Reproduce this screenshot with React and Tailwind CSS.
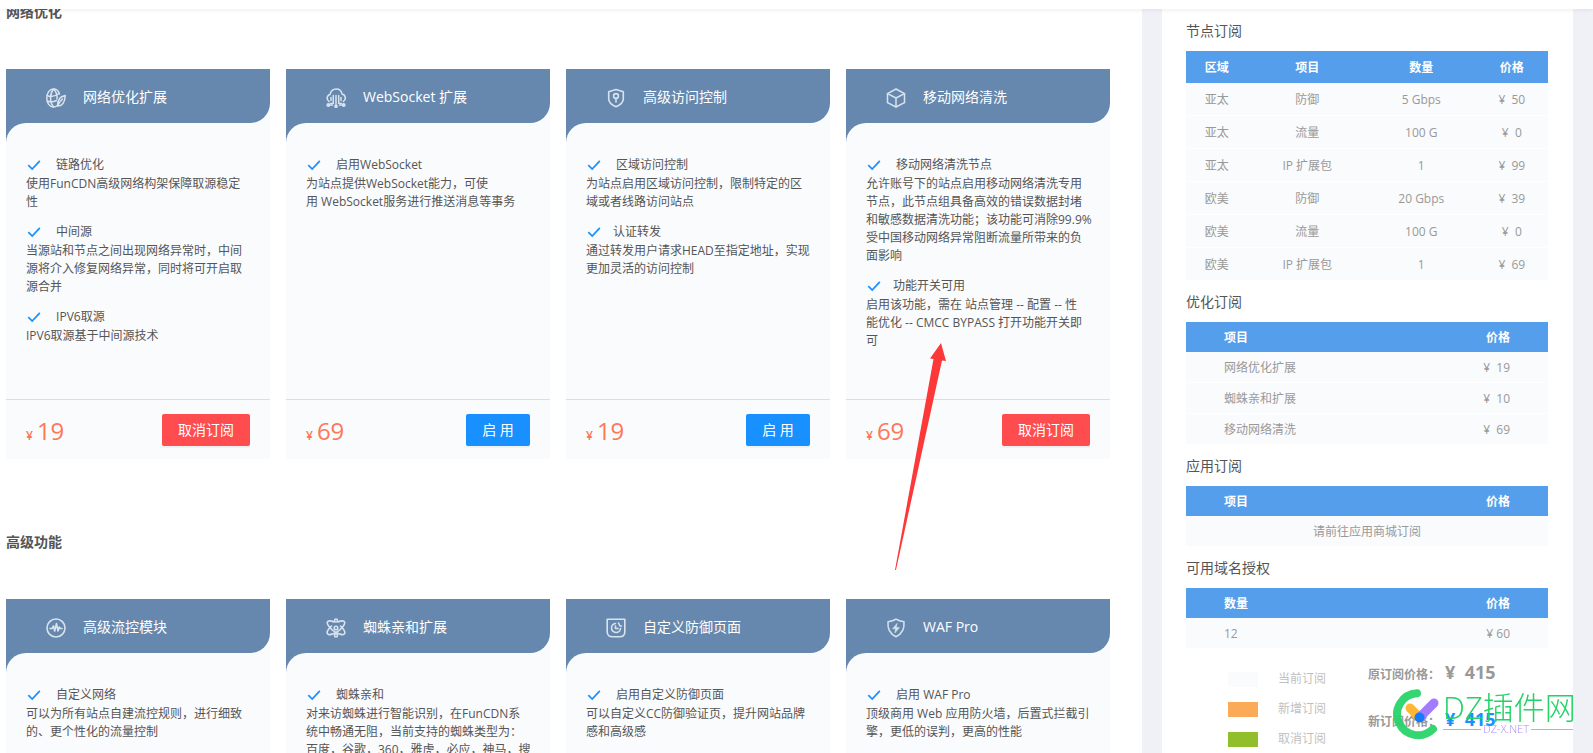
const iconProps = {
  viewBox: '0 0 20 20',
  fill: 'none',
  stroke: 'currentColor',
  strokeLinecap: 'round',
  strokeLinejoin: 'round',
  className: 'size-5 shrink-0 text-[#d9e3ee]',
  'aria-hidden': true,
};

const GlobeIcon = () => (
  <svg {...iconProps} strokeWidth="1.5">
    <path d="M13.500 6C12.500 2.800 10.300 1 7.500 1 3.500 1 .8 5 .8 10s2.700 9 6.700 9c1.500 0 2.800-.5 3.800-1.500" />
    <path d="M1 7.500c4 2 8 1 12-2M1.500 13c3 1.500 6 1 9-.5" />
    <path d="M7.500 1c-4 5-4 13 0 18M7.500 1c3 3 4 6 3.500 10" />
    <path d="M19.200 7.500c-5 1-8 4-7.500 10.500 4 .5 7.500-3.500 7.500-10.500zM12 17.500c1-3 2.500-4.500 4.500-6.500" />
  </svg>
);

const CloudIcon = () => (
  <svg {...iconProps} strokeWidth="1.5">
    <path d="M3 13.500C.3 11.500.5 7.500 4 6.500 4.800 2.800 7.500 1 10.300 1c3 0 5.200 2 5.700 5 3.700.8 4.500 5.300 1.300 7.500" />
    <path d="M10 7.500V18M7.300 7.500v8H4.500M12.700 7.500v8h2.800M5 9.500v3M15 9.500v3" />
    <circle cx="2.300" cy="17" r="1.200" fill="currentColor" />
    <circle cx="10" cy="18.300" r="1.100" fill="currentColor" />
    <circle cx="17.700" cy="17" r="1.200" fill="currentColor" />
    <path d="M3 17h3.500M17 17h-3.500" />
  </svg>
);

const KeyShieldIcon = () => (
  <svg {...iconProps} strokeWidth="1.6">
    <path d="M10 1.500l7.300 2.300v7c0 3.700-3 6.200-7.300 7.900-4.300-1.700-7.300-4.200-7.300-7.900v-7z" />
    <circle cx="10" cy="8" r="2.400" />
    <path d="M10 10.400v3.600" />
  </svg>
);

const CubeIcon = () => (
  <svg {...iconProps} strokeWidth="1.5">
    <path d="M10 1l8.500 4.700v9L10 19l-8.500-4.300v-9z" />
    <path d="M1.500 5.700L10 10l8.500-4.300M10 10v9" />
  </svg>
);

const PulseIcon = () => (
  <svg {...iconProps} strokeWidth="1.6">
    <circle cx="10" cy="10" r="9" />
    <path d="M4 10.500h2L7.500 8l1.200 5 1.800-7.500 1.500 7.500L13.200 9l.8 1.500h2" />
  </svg>
);

const AtomIcon = () => (
  <svg {...iconProps} strokeWidth="1.6">
    <path d="M8 4C5 2.500 2 2.500 1.400 4s1.200 4.500 4.600 7.800 10.500 6 12.300 4.200S17.500 11 14.500 8" />
    <path d="M12 4c3-1.500 6-1.500 6.600 0s-1.200 4.500-4.600 7.800S3.500 17.800 1.700 16 2.500 11 5.500 8" />
    <circle cx="10" cy="10" r="1.800" />
    <circle cx="10" cy="2.500" r="1.500" />
    <circle cx="10" cy="17.500" r="1.500" />
  </svg>
);

const RefreshShieldIcon = () => (
  <svg {...iconProps} strokeWidth="1.6">
    <path d="M1.200 1.200h17.600v12.800c0 3-2.300 4.800-5.300 4.800h-7c-3 0-5.300-1.800-5.300-4.800z" />
    <path d="M9.500 5.500a4.500 4.500 0 1 0 5 5M9.500 8v2.500H12M12.500 5l1.500 3h1.500" />
  </svg>
);

const BoltShieldIcon = () => (
  <svg {...iconProps} strokeWidth="1.5">
    <path d="M10 1.200c2.500 1.800 5 2.300 8 2.600.6 7-1.500 12-8 15-6.500-3-8.600-8-8-15 3-.3 5.500-.8 8-2.600z" />
    <path d="M11 5.500l-4.500 5.300h3L8.800 15l4.700-5.500h-3z" fill="currentColor" strokeWidth="0.5" />
  </svg>
);

const CheckIcon = () => (
  <svg viewBox="0 0 14 14" fill="none" stroke="#1890ff" strokeWidth="1.700" className="size-[14px] shrink-0" aria-hidden="true">
    <path d="M1.300 7.200l3.900 3.800L12.800 2.800" />
  </svg>
);

const sections = [
  {
    title: '网络优化',
    cards: [
      {
        icon: GlobeIcon,
        name: '网络优化扩展',
        price: 19,
        subscribed: true,
        items: [
          ['\u00a0链路优化', '使用FunCDN高级网络构架保障取源稳定性'],
          ['\u00a0中间源', '当源站和节点之间出现网络异常时，中间源将介入修复网络异常，同时将可开启取源合并'],
          ['\u00a0IPV6取源', 'IPV6取源基于中间源技术'],
        ],
      },
      {
        icon: CloudIcon,
        name: 'WebSocket 扩展',
        price: 69,
        items: [['\u00a0启用WebSocket', '为站点提供WebSocket能力，可使用\u00a0WebSocket服务进行推送消息等事务']],
      },
      {
        icon: KeyShieldIcon,
        name: '高级访问控制',
        price: 19,
        items: [
          ['\u00a0区域访问控制', '为站点启用区域访问控制，限制特定的区域或者线路访问站点'],
          ['认证转发', '通过转发用户请求HEAD至指定地址，实现更加灵活的访问控制'],
        ],
      },
      {
        icon: CubeIcon,
        name: '移动网络清洗',
        price: 69,
        subscribed: true,
        items: [
          [
            '\u00a0移动网络清洗节点',
            '允许账号下的站点启用移动网络清洗专用节点，此节点组具备高效的错误数据封堵和敏感数据清洗功能；该功能可消除99.9%受中国移动网络异常阻断流量所带来的负面影响',
          ],
          ['功能开关可用', '启用该功能，需在 站点管理 -- 配置 -- 性\n能优化 -- CMCC BYPASS 打开功能开关即可'],
        ],
      },
    ],
  },
  {
    title: '高级功能',
    cards: [
      {
        icon: PulseIcon,
        name: '高级流控模块',
        price: 29,
        items: [['\u00a0自定义网络', '可以为所有站点自建流控规则，进行细致的、更个性化的流量控制']],
      },
      {
        icon: AtomIcon,
        name: '蜘蛛亲和扩展',
        price: 10,
        subscribed: true,
        items: [['\u00a0蜘蛛亲和', '对来访蜘蛛进行智能识别，在FunCDN系统中畅通无阻，当前支持的蜘蛛类型为：百度，谷歌，360，雅虎，必应，神马，搜狗']],
      },
      {
        icon: RefreshShieldIcon,
        name: '自定义防御页面',
        price: 19,
        items: [['\u00a0启用自定义防御页面', '可以自定义CC防御验证页，提升网站品牌感和高级感']],
      },
      {
        icon: BoltShieldIcon,
        name: 'WAF Pro',
        price: 99,
        items: [['\u00a0启用 WAF Pro', '顶级商用 Web 应用防火墙，后置式拦截引擎，更低的误判，更高的性能']],
      },
    ],
  },
];

const nodeRows = [
  ['亚太', '防御', '5 Gbps', 50],
  ['亚太', '流量', '100 G', 0],
  ['亚太', 'IP 扩展包', '1', 99],
  ['欧美', '防御', '20 Gbps', 39],
  ['欧美', '流量', '100 G', 0],
  ['欧美', 'IP 扩展包', '1', 69],
];

const legend = [
  ['当前订阅', 'bg-[#fafbfd]'],
  ['新增订阅', 'bg-[#fbab57]'],
  ['取消订阅', 'bg-[#90bf2b]'],
];

const tableClass =
  'w-full border-separate border-spacing-0 text-xs text-[#999] [&_td]:border-b [&_td]:border-white [&_td]:pt-[2px] [&_th]:pt-[2px] [&_th]:font-semibold';

function FeatureCard({ card }) {
  const Icon = card.icon;
  return (
    <article className="flex flex-col bg-[#fafbfd]">
      <header className="flex h-[54px] items-center gap-[17px] rounded-br-[20px] bg-[#6688ae] px-10 pt-1">
        <Icon />
        <h3 className="pb-[2px] text-sm text-white">{card.name}</h3>
      </header>
      {/* the blue behind shows through the rounded top left corner */}
      <div className="bg-[#6688ae]">
        <ul className="min-h-[276px] rounded-tl-[20px] bg-[#fafbfd] pt-8 pr-[18px] pl-5 text-xs">
          {card.items.map(([title, text]) => (
            <li key={title} className="mb-[11px]">
              <h4 className="flex items-center gap-3 pl-px leading-5">
                <CheckIcon />
                {title}
              </h4>
              <p className="leading-[18px] whitespace-pre-line">{text}</p>
            </li>
          ))}
        </ul>
      </div>
      <footer className="flex h-[60px] items-center justify-between border-t border-[#dcdfe2] px-5">
        <p className="flex items-baseline gap-1 pt-[2px] text-[#ff7759]">
          <span className="text-xs font-semibold">¥</span>
          <span className="text-2xl font-medium">{card.price}</span>
        </p>
        {card.subscribed ? (
          <button type="button" className="h-8 rounded-xs bg-[#ff4d4f] px-4 text-sm text-white shadow-[0_2px_0_rgba(0,0,0,0.04)]">
            取消订阅
          </button>
        ) : (
          <button type="button" className="h-8 w-16 rounded-xs bg-[#1890ff] text-sm text-white shadow-[0_2px_0_rgba(0,0,0,0.04)]">
            启 用
          </button>
        )}
      </footer>
    </article>
  );
}

function SideTitle({ children }) {
  return <h2 className="pt-[10px] pb-[9px] text-sm leading-[22px] text-[#555]">{children}</h2>;
}

function PriceTable({ heading, rows, children }) {
  return (
    <table className={tableClass}>
      <thead>
        <tr className="h-[30px] bg-[#559eeb] text-white">
          <th className="pl-[38px] text-left">{heading}</th>
          <th className="pr-[38px] text-right">价格</th>
        </tr>
      </thead>
      <tbody>
        {rows.map(([name, price]) => (
          <tr key={name} className="h-[31px] bg-[#fafbfd]">
            <td className="pl-[38px]">{name}</td>
            <td className="pr-[38px] text-right whitespace-pre">{price}</td>
          </tr>
        ))}
        {children}
      </tbody>
    </table>
  );
}

function Watermark() {
  return (
    <div className="pointer-events-none fixed right-5 bottom-3 flex w-[182px] items-start gap-[2px] overflow-hidden">
      <svg viewBox="0 0 50 54" className="h-[54px] w-[50px] shrink-0" fill="none" strokeLinecap="round" aria-hidden="true">
        <path d="M26 6.200A21 21 0 1 0 42 42" stroke="#23d366" strokeWidth="8" opacity="0.93" />
        <path d="M19 21l9 9" stroke="#ffb734" strokeWidth="9" />
        <path d="M43 16L29 30" stroke="#a17cff" strokeWidth="9" />
        <circle cx="28.500" cy="30.500" r="5" fill="#137cf7" />
      </svg>
      <div className="pt-1">
        <p className="text-[31px] leading-8 font-light whitespace-nowrap text-[#23d366]">DZ插件网</p>
        <p className="flex items-center gap-[2px] text-[11px] leading-3 font-light whitespace-nowrap text-[#a98ff8]">
          <span className="h-px w-[38px] shrink-0 bg-[#b9a4fa]" />
          DZ-X.NET
          <span className="h-px w-[42px] shrink-0 bg-[#b9a4fa]" />
        </p>
      </div>
    </div>
  );
}

function App() {
  return (
    <div className="flex h-screen overflow-hidden bg-[#f0f1f6] pr-5 font-['Open_Sans','Noto_Sans_CJK_SC',sans-serif] text-[#555]" lang="zh-CN">
      <div className="fixed inset-x-0 top-0 z-10 h-[9px] bg-white shadow-[0_1px_4px_rgba(0,21,41,0.08)]" />

      <main className="relative mr-5 min-w-0 flex-1 bg-white pt-px pr-8 pl-[6px]">
        {sections.map((section) => (
          <section key={section.title} className="mb-[72px]">
            <h2 className="mb-[46px] text-sm leading-[22px] font-semibold">{section.title}</h2>
            <div className="grid grid-cols-4 gap-4">
              {section.cards.map((card) => (
                <FeatureCard key={card.name} card={card} />
              ))}
            </div>
          </section>
        ))}
        <svg viewBox="0 0 52 228" className="pointer-events-none absolute top-[343px] right-[196px] h-[228px] w-[52px]" aria-hidden="true">
          <path d="M1 227L39.500 16 36 15.500 47 0l5 18-4-.5L2 227z" fill="#fc3838" />
        </svg>
      </main>

      <aside className="w-[411px] shrink-0 bg-white pt-[10px] pr-[25px] pl-6">
        <SideTitle>节点订阅</SideTitle>
        <table className={`${tableClass} table-fixed text-center`}>
          <thead>
            <tr className="h-8 bg-[#559eeb] text-white">
              <th className="w-[17%]">区域</th>
              <th className="w-[33%]">项目</th>
              <th className="w-[30%]">数量</th>
              <th className="w-[20%]">价格</th>
            </tr>
          </thead>
          <tbody>
            {nodeRows.map(([area, item, amount, price]) => (
              <tr key={area + item} className="h-[33px] bg-[#fafbfd]">
                <td>{area}</td>
                <td>{item}</td>
                <td>{amount}</td>
                <td className="whitespace-pre">{`¥  ${price}`}</td>
              </tr>
            ))}
          </tbody>
        </table>

        <SideTitle>优化订阅</SideTitle>
        <PriceTable
          heading="项目"
          rows={[
            ['网络优化扩展', '¥  19'],
            ['蜘蛛亲和扩展', '¥  10'],
            ['移动网络清洗', '¥  69'],
          ]}
        />

        <SideTitle>应用订阅</SideTitle>
        <PriceTable heading="项目" rows={[]}>
          <tr className="h-[31px] bg-[#fafbfd]">
            <td colSpan={2} className="text-center">请前往应用商城订阅</td>
          </tr>
        </PriceTable>

        <SideTitle>可用域名授权</SideTitle>
        <PriceTable heading="数量" rows={[['12', '¥ 60']]} />

        {/* Legend and totals */}
        <div className="mt-[15px] flex pl-[42px] text-xs">
          <ul className="w-[140px] text-[#bfbfbf]">
            {legend.map(([label, color]) => (
              <li key={label} className="flex h-[30px] items-center gap-5">
                <span className={`h-[15px] w-[30px] ${color}`} />
                {label}
              </li>
            ))}
          </ul>
          <dl className="grid auto-rows-[47px] grid-cols-[77px_auto] items-baseline font-semibold whitespace-pre text-[#999]">
            <dt>原订阅价格：</dt>
            <dd className="text-lg leading-4 font-bold">{'¥  415'}</dd>
            <dt>新订阅价格：</dt>
            <dd className="text-lg leading-4 font-bold text-[#1890ff]">{'¥  415'}</dd>
          </dl>
        </div>
      </aside>

      <Watermark />
    </div>
  );
}

export default App;
